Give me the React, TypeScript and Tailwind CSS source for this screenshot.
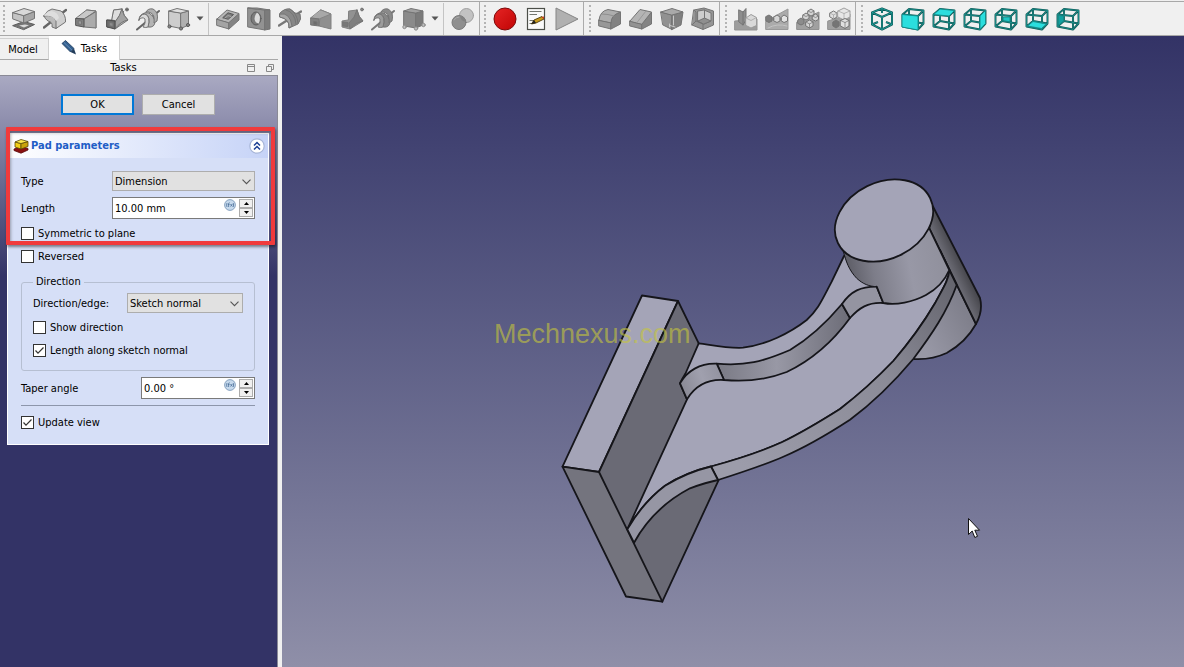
import React, { useState } from "react";

type IconProps = { children: React.ReactNode };

function Glyph({ children }: IconProps) {
  return (
    <svg
      viewBox="0 0 24 24"
      className="size-6"
      fill="none"
      stroke="#747474"
      strokeWidth="1"
      strokeLinejoin="round"
      strokeLinecap="round"
      aria-hidden="true"
    >
      {children}
    </svg>
  );
}

const PadIcon = (
  <Glyph>
    <path d="M1 18.500L12 14.500L22.500 17.500L12 22.500Z" fill="#757575" stroke="#5c5c5c" />
    <path d="M7 18.600L13 17.500L17 18.200L12 20.500Z" fill="#d8d8d8" stroke="none" />
    <path d="M1 5.500L12 8.500V16L1 12Z" fill="#c4c4c4" />
    <path d="M12 8.500L22.500 4.500V11.500L12 16Z" fill="#a6a6a6" />
    <path d="M1 5.500L12 1.500L22.500 4.500L12 8.500Z" fill="#d8d8d8" />
  </Glyph>
);

const RevolutionIcon = (
  <Glyph>
    <path d="M1 20.500L23 3" strokeWidth="2.400" stroke="#666" />
    <path d="M1 9Q4 3 9 2L18 4Q23 8 22.500 15L13 21.500Q13 12 1 9Z" fill="#cfcfcf" />
    <path d="M1 9Q11 7 13 14V21.500L9 20Q10 15 5 14Q2 12 1 9Z" fill="#bababa" />
    <path d="M1 9Q4 4 8 4Q15 5 16 11L13 14Q10 8 1 9Z" fill="#dedede" stroke="none" />
  </Glyph>
);

const LoftIcon = (
  <Glyph>
    <path d="M13 3L22 4V21L17 19L12 8Z" fill="#b4b4b4" />
    <path d="M13 3L22 4L10 12L2 11.500Z" fill="#c8c8c8" />
    <path d="M10 12L22 4.500V21L10 20Z" fill="#ababab" />
    <path d="M2 11.500L10 12V20L2 18.500Z" fill="#808080" stroke="#555" />
    <path d="M4.500 13.700L7.500 14V17.500L4.500 17Z" fill="#9a9a9a" />
  </Glyph>
);

const DarkLoftIcon = (
  <Glyph>
    <path d="M12 3L22 7V22L10 19L11 11Z" fill="#8f8f8f" stroke="#808080" />
    <path d="M12 3L22 7L10 12L2 11Z" fill="#a8a8a8" stroke="#858585" />
    <path d="M2 11L10 12V19L2 18Z" fill="#808080" />
    <path d="M5 14.500L8 15V18L5 17.500Z" fill="#6c6c6c" />
  </Glyph>
);

const PipeIcon = (
  <Glyph>
    <path d="M9 3L17 2Q19 10 23 13L10 22L6 20L2 20V13L7 13Z" fill="#b0b0b0" />
    <path d="M9 3L17 2Q16 8 11 14L7 13Z" fill="#dedede" />
    <path d="M17 2Q18 9 23 13Q16 14 10 22V15Q15 9 17 2Z" fill="#a2a2a2" />
    <path d="M2 13L10 14V22L2 20Z" fill="#6d6d6d" stroke="#4e4e4e" />
    <path d="M4.500 15.500L8 16V19.500L4.500 18.800Z" fill="#8e8e8e" />
    <path d="M18 5L21 2" strokeDasharray="1 2" />
    <circle cx="22" cy="2.500" r="1.500" fill="#686868" />
  </Glyph>
);

const DarkPipeIcon = (
  <Glyph>
    <path d="M9 4L17 3Q19 11 23 14L10 22L2 20V14L8 13Z" fill="#929292" stroke="#808080" />
    <path d="M17 3Q18 10 23 14Q16 15 10 22L9 16Q15 11 17 3Z" fill="#7f7f7f" stroke="#757575" />
    <path d="M3 15L8 15.500V19.500L3 19Z" fill="#777" />
    <circle cx="22" cy="2.500" r="1.400" fill="#8c8c8c" />
  </Glyph>
);

const HelixIcon = (
  <Glyph>
    <path d="M1 22.500L23 4" strokeWidth="2" stroke="#666" />
    <path d="M3 13Q3 7 9 7Q15 9 12 20Q19 21 19 14Q18 9 13 6Q5 4 3 13Z" fill="#b4b4b4" />
    <path d="M3 13Q6 9 9 12Q10 16 7 20Q10 21 12 20Q15 9 9 7Q4 7 3 13Z" fill="#dadada" />
    <path d="M10 5Q12 1 17 2Q23 5 21 14L18 16Q19 8 15 6Q12 4 10 5Z" fill="#b0b0b0" />
  </Glyph>
);

const DarkHelixIcon = (
  <Glyph>
    <path d="M1 22.500L23 4" strokeWidth="2" stroke="#777" />
    <path d="M3 13Q3 7 9 7Q15 9 12 20Q19 21 19 14Q18 9 13 6Q5 4 3 13Z" fill="#878787" />
    <path d="M3 13Q6 9 9 12Q10 16 7 20Q10 21 12 20Q15 9 9 7Q4 7 3 13Z" fill="#9c9c9c" />
    <path d="M10 5Q12 1 17 2Q23 5 21 14L18 16Q19 8 15 6Q12 4 10 5Z" fill="#8a8a8a" />
  </Glyph>
);

const PrimitiveIcon = (
  <Glyph>
    <path d="M2 4L14 6V21.500L2 19Z" fill="#cdcdcd" />
    <path d="M14 6L21.500 4V18L14 21.500Z" fill="#b0b0b0" />
    <path d="M2 4L10 1.500L21.500 4L14 6Z" fill="#e0e0e0" />
    <g fill="#858585" stroke="#5c5c5c">
      <circle cx="2.500" cy="19.500" r="1.600" />
      <circle cx="14" cy="21.500" r="1.600" />
      <circle cx="21" cy="18" r="1.600" />
    </g>
  </Glyph>
);

const DarkPrimitiveIcon = (
  <Glyph>
    <path d="M2 4L14 6V21L2 19Z" fill="#8a8a8a" />
    <path d="M14 6L21 4V18L14 21Z" fill="#7a7a7a" />
    <path d="M2 4L9 1.500L21 4L14 6Z" fill="#a0a0a0" />
    <g fill="#bdbdbd" stroke="#8c8c8c">
      <circle cx="2.500" cy="20" r="1.700" />
      <circle cx="14" cy="21.500" r="1.700" />
      <circle cx="21.500" cy="18" r="1.700" />
    </g>
  </Glyph>
);

const PocketIcon = (
  <Glyph>
    <path d="M1 12L13 15.500V22L1 18.500Z" fill="#a4a4a4" />
    <path d="M13 15.500L23 6.500V13L13 22Z" fill="#838383" />
    <path d="M1 12L11 3L23 6.500L13 15.500Z" fill="#b6b6b6" />
    <path d="M7 10.500L12 5.800L17.500 7.500L12.500 12Z" fill="#7d7d7d" stroke="#555" />
    <path d="M9 11L12 8.500L15 9.500" stroke="#a8a8a8" />
  </Glyph>
);

const HoleIcon = (
  <Glyph>
    <path d="M1 1L18 3V23L1 20Z" fill="#929292" />
    <path d="M1 1L10 1L23 3L18 3Z" fill="#aaa" />
    <path d="M18 3L23 3V22L18 23Z" fill="#7b7b7b" />
    <ellipse cx="9" cy="11.500" rx="5" ry="6.500" fill="#7b7b7b" stroke="#5d5d5d" />
    <path d="M10 5.500Q14.500 8 12 16.500Q8 16 7.500 12Q7.500 8 10 5.500Z" fill="#dcdcdc" stroke="none" />
  </Glyph>
);

const GrooveIcon = (
  <Glyph>
    <path d="M1 18.500L23 4.500" strokeWidth="2.400" stroke="#787878" />
    <path d="M2 6Q7 1 12 2L17 6L22 7Q24 12 20 17L11 21Q12 12 2 10Z" fill="#878787" stroke="#757575" />
    <path d="M2 7Q12 5 14 19L11 21Q12 12 2 10Z" fill="#a6a6a6" />
    <path d="M8 3Q17 5 18 17" />
    <path d="M12 2Q19 6 20 16" />
  </Glyph>
);

const BooleanIcon = (
  <Glyph>
    <circle cx="15.500" cy="8.500" r="7" fill="#c2c2c2" stroke="#a0a0a0" />
    <circle cx="8" cy="15.500" r="7" fill="#8f8f8f" stroke="#7a7a7a" />
    <path d="M9 9A7 7 0 0 1 15 15A7 7 0 0 1 9 9Z" fill="#828282" stroke="none" />
    <path d="M3 13Q5 10 8 10" stroke="#a8a8a8" />
  </Glyph>
);

const FilletIcon = (
  <Glyph>
    <path d="M1 13L13 15.500V22L1 19Z" fill="#979797" />
    <path d="M13 15Q13 8 22.500 5V17L13 22Z" fill="#828282" />
    <path d="M1 13Q2 4 10 2.500L22.500 5Q13 8 13 15.500Z" fill="#adadad" />
    <path d="M4 7Q10 7 16 9" stroke="#8f8f8f" />
  </Glyph>
);

const ChamferIcon = (
  <Glyph>
    <path d="M1 14L13 17V22L1 19Z" fill="#929292" />
    <path d="M13 17L22.500 5V17L13 22Z" fill="#848484" />
    <path d="M1 14L11 2.500L22.500 5L13 17Z" fill="#b4b4b4" />
    <path d="M8 15.500L17 4" stroke="#9a9a9a" />
  </Glyph>
);

const DraftIcon = (
  <Glyph>
    <path d="M1 5L12 8V22.500L3 18Z" fill="#919191" />
    <path d="M12 8L23 5L21 18L12 22.500Z" fill="#808080" />
    <path d="M1 5L12 1.500L23 5L12 8Z" fill="#a9a9a9" />
    <path d="M9.500 20V17M13.500 9V18M10 18.500L15 20" stroke="#c8c8c8" />
  </Glyph>
);

const ThicknessIcon = (
  <Glyph>
    <path d="M3 3L13 1L22.500 4V18L12 22.500L1 18Z" fill="#959595" />
    <path d="M7 4L13 3L20 6V14L13 17L7 14Z" fill="#cdcdcd" />
    <path d="M7 14L13.500 11L20 14L13 17Z" fill="#8f8f8f" />
    <path d="M13.500 3V11M3 3L5 5V14L1 18M5 14L12 17V22" />
  </Glyph>
);

const MirrorIcon = (
  <Glyph>
    <path d="M1 14L23 12V23H1Z" fill="#9d9d9d" stroke="#929292" />
    <path d="M5 3L9 5L12 1.500V13L9 18L5 15Z" fill="#8e8e8e" />
    <path d="M9 5V18" />
    <path d="M12 11L17 7.500L22.500 10.500V18.500L17 21L12 18.500Z" fill="#d9d9d9" stroke="#9a9a9a" />
    <path d="M12 11L17 13.500L22.500 10.500" stroke="#b0b0b0" />
  </Glyph>
);

const LinearIcon = (
  <Glyph>
    <path d="M1 14L23 2V22.500H1Z" fill="#ababab" stroke="#999" />
    <path d="M1 9.500L4 8L7 10V14L4 15.500L1 14Z" fill="#7d7d7d" />
    <path d="M9 10L12 8L15 10V14L12 15.500L9 14Z" fill="#d6d6d6" />
    <path d="M16.500 10L19 8L22.500 10V14L19 15.500L16.500 14Z" fill="#e3e3e3" />
    <path d="M7 12H9M15 12H16.500" />
    <path d="M3 21Q12 16 22 19" stroke="#c3c3c3" />
  </Glyph>
);

const PolarIcon = (
  <Glyph>
    <path d="M1 15L23 5V22.500H1Z" fill="#a0a0a0" stroke="#929292" />
    <g fill="#d4d4d4">
      <path d="M12 4L15 2L18 4V7.500L15 9L12 7.500Z" />
      <path d="M7 8L10 6L13 8V11.500L10 13L7 11.500Z" />
      <path d="M16.500 9L19.500 7L22.500 9V12.500L19.500 14L16.500 12.500Z" />
      <path d="M2 13L5 11L8 13V16.500L5 18L2 16.500Z" fill="#8c8c8c" />
      <path d="M10 15L13.500 13L17 15V19L13.500 21L10 19Z" />
    </g>
    <path d="M12 4L15 5.500L18 4M7 8L10 9.500L13 8M16.500 9L19.500 10.500L22.500 9M10 15L13.500 17L17 15M13.500 17V21" strokeWidth="0.700" />
  </Glyph>
);

const MultiTransformIcon = (
  <Glyph>
    <path d="M1 14L23 7V22.500H1Z" fill="#a0a0a0" stroke="#929292" />
    <path d="M3 6L6.500 4L10 6V10L6.500 12L3 10Z" fill="#e0e0e0" />
    <path d="M11 4L17 1L23 4V10L17 13L11 10Z" fill="#e6e6e6" stroke="#a0a0a0" />
    <path d="M11 4L17 6.500L23 4M17 6.500V13M3 6L6.500 8L10 6M6.500 8V12" stroke="#a0a0a0" strokeWidth="0.700" />
    <path d="M6 15L9 13L12 15V19L9 21L6 19Z" fill="#757575" />
    <path d="M13.500 13.500L18 11.500L22 13.500V19L18 21.500L13.500 19Z" fill="#e0e0e0" />
    <path d="M13.500 13.500L18 15.500L22 13.500M18 15.500V21.500" strokeWidth="0.700" />
  </Glyph>
);

const RecordIcon = (
  <svg viewBox="0 0 24 24" className="size-6" aria-hidden="true">
    <defs>
      <linearGradient id="rec" x1="0" y1="0" x2="1" y2="1">
        <stop offset="0" stopColor="#e62525" />
        <stop offset="1" stopColor="#c00404" />
      </linearGradient>
    </defs>
    <circle cx="12" cy="12" r="11" fill="url(#rec)" stroke="#7d0b0b" strokeWidth="1" />
  </svg>
);

const MacroIcon = (
  <svg viewBox="0 0 24 24" className="size-6" aria-hidden="true">
    <rect x="3.500" y="1.500" width="17" height="21" fill="#fafafa" stroke="#4c4f49" strokeWidth="1.200" />
    <path d="M5.500 4.500H17.500M5.500 7.500H13M5.500 13.500H11M5.500 16.500H9" stroke="#73766f" strokeWidth="1.100" />
    <path d="M7.500 17L10 13L18 9.500L20 12L12 16Z" fill="#c79a1e" stroke="#4f3b08" strokeWidth="0.900" />
    <path d="M7.500 17L10 13L12 16Z" fill="#222" />
    <path d="M17.500 10L20 9.500L20 12Z" fill="#d23a22" />
  </svg>
);

const PlayIcon = (
  <svg viewBox="0 0 24 24" className="size-6" aria-hidden="true">
    <path d="M1 1L23 12L1 23Z" fill="#b0b0b0" stroke="#858585" strokeWidth="1" strokeLinejoin="round" />
  </svg>
);

const CUBE_EDGES =
  "M8 2L22.500 3.500V16.500L8 14ZM1.500 7.500L17 9V22.500L1.500 19.500ZM1.500 7.500L8 2M17 9L22.500 3.500M17 22.500L22.500 16.500M1.500 19.500L8 14";

function ViewCube({ face, tone = "#2bdede" }: { face: string; tone?: string }) {
  return (
    <svg viewBox="0 0 24 24" className="size-6" fill="none" strokeLinejoin="round" aria-hidden="true">
      <path d={CUBE_EDGES} stroke="#0c5553" strokeWidth="1.900" />
      <path d={CUBE_EDGES} stroke="#22a8a3" strokeWidth="0.600" />
      <path d={face} fill={tone} stroke="#128a88" strokeWidth="0.900" />
    </svg>
  );
}

const ISO_EDGES =
  "M12 1.500L22 5.500V17.500L12 22.500L2 17.500V5.500ZM2 5.500L12 10L22 5.500M12 10V22.500M12 1.500V6M2 17.500L8 15M22 17.500L16 15";

const IsoIcon = (
  <svg viewBox="0 0 24 24" className="size-6" fill="none" strokeLinejoin="round" aria-hidden="true">
    <path d={ISO_EDGES} stroke="#0c5553" strokeWidth="2" />
    <path d={ISO_EDGES} stroke="#25b5b0" strokeWidth="0.700" />
  </svg>
);

function Tool({ label, children }: { label: string; children: React.ReactNode }) {
  return (
    <button type="button" aria-label={label} title={label} className="flex h-8 w-[31px] shrink-0 items-center justify-center">
      {children}
    </button>
  );
}

function DropArrow() {
  return (
    <button type="button" aria-label="More" className="flex h-8 w-[11px] shrink-0 items-center justify-center">
      <svg viewBox="0 0 8 5" className="h-[5px] w-2" aria-hidden="true">
        <path d="M0.500 0.500H7.500L4 4.500Z" fill="#555" />
      </svg>
    </button>
  );
}

function Separator() {
  return <span className="mx-[3px] h-8 w-px shrink-0 bg-[#c4c4c4]" />;
}

function Grip() {
  return <span className="mx-[3px] h-[27px] w-0 shrink-0 border-l-2 border-dotted border-[#b4b4b4]" />;
}

function Toolbar() {
  return (
    <header className="flex h-9 shrink-0 overflow-hidden border-b border-[#a8a8a8] bg-[#f0f0f0] pt-px">
      <div className="flex grow border-t border-[#a8a8a8]">
        <div className="flex shrink-0 items-center border-r border-[#ababab] pr-px">
          <Grip />
          <Tool label="Pad">{PadIcon}</Tool>
          <Tool label="Revolution">{RevolutionIcon}</Tool>
          <Tool label="Additive loft">{LoftIcon}</Tool>
          <Tool label="Additive pipe">{PipeIcon}</Tool>
          <Tool label="Additive helix">{HelixIcon}</Tool>
          <Tool label="Additive primitive">{PrimitiveIcon}</Tool>
          <DropArrow />
          <Separator />
          <Tool label="Pocket">{PocketIcon}</Tool>
          <Tool label="Hole">{HoleIcon}</Tool>
          <Tool label="Groove">{GrooveIcon}</Tool>
          <Tool label="Subtractive loft">{DarkLoftIcon}</Tool>
          <Tool label="Subtractive pipe">{DarkPipeIcon}</Tool>
          <Tool label="Subtractive helix">{DarkHelixIcon}</Tool>
          <Tool label="Subtractive primitive">{DarkPrimitiveIcon}</Tool>
          <DropArrow />
          <Separator />
          <Tool label="Boolean operation">{BooleanIcon}</Tool>
        </div>
        <div className="flex shrink-0 items-center border-r border-[#ababab] px-px">
          <Grip />
          <Tool label="Macro recording">{RecordIcon}</Tool>
          <Tool label="Macros">{MacroIcon}</Tool>
          <Tool label="Execute macro">{PlayIcon}</Tool>
        </div>
        <div className="flex shrink-0 items-center border-r border-[#ababab] pr-px pl-[2px]">
          <Grip />
          <Tool label="Fillet">{FilletIcon}</Tool>
          <Tool label="Chamfer">{ChamferIcon}</Tool>
          <Tool label="Draft">{DraftIcon}</Tool>
          <Tool label="Thickness">{ThicknessIcon}</Tool>
        </div>
        <div className="flex shrink-0 items-center border-r border-[#ababab] pr-px pl-[2px]">
          <Grip />
          <Tool label="Mirrored">{MirrorIcon}</Tool>
          <Tool label="Linear pattern">{LinearIcon}</Tool>
          <Tool label="Polar pattern">{PolarIcon}</Tool>
          <Tool label="MultiTransform">{MultiTransformIcon}</Tool>
        </div>
        <div className="flex shrink-0 items-center pl-[2px]">
          <Grip />
          <Tool label="Isometric">{IsoIcon}</Tool>
          <Tool label="Front">
            <ViewCube face="M1 7.500L17 9V23L1 20Z" />
          </Tool>
          <Tool label="Top">
            <ViewCube face="M8 2L22.500 3.500L17 9L1.500 7.500Z" />
          </Tool>
          <Tool label="Right">
            <ViewCube face="M22.500 3.500V16.500L17 22.500V9Z" />
          </Tool>
          <Tool label="Rear">
            <ViewCube face="M9 10H16V14.800L9 13.500Z" tone="#1fc4c4" />
          </Tool>
          <Tool label="Bottom">
            <ViewCube face="M8 14.500L21.500 17L16.500 21.500L2.500 19Z" />
          </Tool>
          <Tool label="Left">
            <ViewCube face="M7.500 9V14L2.500 18.500V8.500Z" tone="#12a0a0" />
          </Tool>
        </div>
      </div>
    </header>
  );
}

function Check({ label, initial = false }: { label: string; initial?: boolean }) {
  const [on, setOn] = useState(initial);
  return (
    <label className="flex h-[13px] items-center gap-1">
      <span className="relative flex size-[13px]">
        <input
          type="checkbox"
          checked={on}
          onChange={() => setOn(!on)}
          className="size-[13px] appearance-none border border-[#333] bg-white"
        />
        {on && (
          <svg viewBox="0 0 13 13" className="pointer-events-none absolute inset-0" fill="none" aria-hidden="true">
            <path d="M2.500 6.500L5 9.200L10.500 3.500" stroke="#333" strokeWidth="1.200" />
          </svg>
        )}
      </span>
      <span>{label}</span>
    </label>
  );
}

function Combo({ id, value, options }: { id: string; value: string; options: string[] }) {
  return (
    <span className="relative flex h-5 w-full">
      <select
        id={id}
        defaultValue={value}
        className="h-5 w-full appearance-none border border-[#adadad] bg-[#e1e1e1] px-[2px] pt-[2px] leading-4"
      >
        {options.map((o) => (
          <option key={o}>{o}</option>
        ))}
      </select>
      <svg viewBox="0 0 9 6" className="pointer-events-none absolute top-2 right-1 h-[6px] w-[9px]" fill="none" aria-hidden="true">
        <path d="M0.500 0.700L4.500 4.700L8.500 0.700" stroke="#555" strokeWidth="1.100" />
      </svg>
    </span>
  );
}

function Spin({ id, value }: { id: string; value: string }) {
  return (
    <span className="flex h-[22px] w-full min-w-0 border border-[#7a7a7a] bg-white p-px">
      <input id={id} defaultValue={value} className="w-0 min-w-0 grow bg-transparent pt-[2px] pl-px outline-none" />
      <button type="button" aria-label="Formula editor" className="mr-[3px] size-3 shrink-0">
        <svg viewBox="0 0 12 12" className="size-3" aria-hidden="true">
          <circle cx="6" cy="6" r="5.400" fill="#c6d9ec" stroke="#7d9aba" strokeWidth="0.900" />
          <path
            d="M3 4Q2.200 6 3 8M5.600 3.700Q4.600 3.700 4.600 5V8M3.900 5.500H5.500M6.500 5L8.300 7.500M8.300 5L6.500 7.500M9.200 4Q10 6 9.200 8"
            stroke="#4d719a"
            strokeWidth="0.800"
            fill="none"
          />
        </svg>
      </button>
      <span className="flex w-[14px] shrink-0 flex-col">
        <button type="button" aria-label="Increase" className="flex h-[9px] items-center justify-center border border-[#acacac] bg-[#f0f0f0]">
          <svg viewBox="0 0 5 3" className="h-[3px] w-[5px]" aria-hidden="true">
            <path d="M0 3H5L2.500 0Z" fill="#000" />
          </svg>
        </button>
        <button type="button" aria-label="Decrease" className="flex h-[9px] items-center justify-center border border-[#acacac] bg-[#f0f0f0]">
          <svg viewBox="0 0 5 3" className="h-[3px] w-[5px]" aria-hidden="true">
            <path d="M0 0H5L2.500 3Z" fill="#000" />
          </svg>
        </button>
      </span>
    </span>
  );
}

function PadParameters() {
  return (
    <section className="border border-white bg-[#d6dff7]">
      <h2 className="flex h-6 items-center bg-linear-to-r from-white to-[#c6d3f7] pr-[3px] pl-[5px] font-bold text-[#215dc6]">
        <svg viewBox="0 0 16 16" className="mr-[2px] size-4" strokeLinejoin="round" aria-hidden="true">
          <path d="M1 11L8 8.500L15 10.500V12L8 15.200L1 12.500Z" fill="#8a1212" stroke="#5c0b0b" strokeWidth="0.800" />
          <path d="M2 4L8 5.500V11L2 9Z" fill="#f3cf17" stroke="#5b4a05" strokeWidth="0.800" />
          <path d="M8 5.500L15 3.500V8.500L8 11Z" fill="#c9a40b" stroke="#5b4a05" strokeWidth="0.800" />
          <path d="M2 4L8 1.500L15 3.500L8 5.500Z" fill="#fbe84e" stroke="#5b4a05" strokeWidth="0.800" />
        </svg>
        <span className="grow">Pad parameters</span>
        <button type="button" aria-label="Collapse" className="size-4">
          <svg viewBox="0 0 16 16" className="size-4" fill="none" aria-hidden="true">
            <circle cx="8" cy="8" r="7.200" fill="#fff" stroke="#a8b6d8" strokeWidth="1.200" />
            <path d="M5 7.500L8 4.500L11 7.500M5 11.500L8 8.500L11 11.500" stroke="#1c3f94" strokeWidth="1.500" />
          </svg>
        </button>
      </h2>
      <div className="px-[13px] pt-[13px] pb-[15px]">
        <div className="flex items-center">
          <label htmlFor="type" className="w-[91px] shrink-0 pt-[2px]">
            Type
          </label>
          <Combo id="type" value="Dimension" options={["Dimension", "Through all", "To first", "Up to face", "Two dimensions"]} />
        </div>
        <div className="mt-[6px] flex items-center">
          <label htmlFor="length" className="w-[91px] shrink-0 pt-[2px]">
            Length
          </label>
          <Spin id="length" value="10.00 mm" />
        </div>
        <div className="mt-2 flex flex-col gap-[10px]">
          <Check label="Symmetric to plane" />
          <Check label="Reversed" />
        </div>
        <fieldset className="mt-3 rounded-[3px] border border-[#b6bfd2] px-[11px] pb-[13px]">
          <legend className="px-[3px] leading-[14px]">Direction</legend>
          <div className="mt-1 flex items-center">
            <label htmlFor="edge" className="w-[94px] shrink-0 pt-[2px]">
              Direction/edge:
            </label>
            <Combo id="edge" value="Sketch normal" options={["Sketch normal", "Select reference...", "Custom direction"]} />
          </div>
          <div className="mt-2 flex flex-col gap-[10px]">
            <Check label="Show direction" />
            <Check label="Length along sketch normal" initial />
          </div>
        </fieldset>
        <div className="mt-[6px] flex items-center">
          <label htmlFor="taper" className="w-[120px] shrink-0 pt-[2px]">
            Taper angle
          </label>
          <Spin id="taper" value="0.00 °" />
        </div>
        <hr className="mt-[6px] mb-[10px] border-[#8d96ab]" />
        <Check label="Update view" initial />
      </div>
    </section>
  );
}

function TaskPanel() {
  return (
    <aside className="flex w-[282px] shrink-0 flex-col bg-[#f0f0f0] pr-1">
      <nav className="flex h-6 shrink-0 items-end">
        <button type="button" className="h-[22px] w-[49px] border-t border-r border-b border-[#d0d0d0] border-b-[#a8a8a8] pt-[2px] pr-[2px] text-center">
          Model
        </button>
        <button type="button" className="flex h-6 w-[71px] items-center justify-center gap-1 border-r border-[#d0d0d0] bg-white">
          <svg viewBox="0 0 16 16" className="size-4" aria-hidden="true">
            <path d="M1 3.500L4.500 0.500L13 8.500L9.500 12Z" fill="#34608f" stroke="#1d3a5c" strokeWidth="0.800" />
            <path d="M13 8.500L9.500 12L15 14.500Z" fill="#223c5a" />
            <path d="M3 2.500L11 10.200" stroke="#6b93bd" strokeWidth="0.900" />
          </svg>
          <span className="pt-[2px]">Tasks</span>
        </button>
        <span className="h-px grow bg-[#a8a8a8]" />
      </nav>
      <div className="flex h-[15px] shrink-0 items-center justify-end gap-[11px] pr-1">
        <span className="grow pt-px pl-[11px] text-center">Tasks</span>
        <button type="button" aria-label="Collapse panel" className="size-2">
          <svg viewBox="0 0 8 8" className="size-2" fill="none" stroke="#888" aria-hidden="true">
            <path d="M0.500 0.500H7.500V7.500H0.500ZM0.500 2.500H7.500" />
          </svg>
        </button>
        <button type="button" aria-label="Float panel" className="size-2">
          <svg viewBox="0 0 8 8" className="size-2" fill="none" stroke="#888" aria-hidden="true">
            <path d="M0.500 2.500H5.500V7.500H0.500ZM2.500 2.500V0.500H7.500V5.500H5.500" />
          </svg>
        </button>
      </div>
      <div className="grow border-t border-r border-[#8a8a96] bg-[#333366] bg-[linear-gradient(#a9a9c2,#333366_200px)] pr-2 pl-[7px]">
        <div className="mt-[18px] flex justify-center gap-2">
          <button type="button" className="h-[21px] w-[73px] border-2 border-[#0078d7] bg-[#e1e1e1]">
            OK
          </button>
          <button type="button" className="h-[21px] w-[73px] border border-[#adadad] bg-[#e1e1e1]">
            Cancel
          </button>
        </div>
        <div className="relative mt-[18px]">
          <PadParameters />
          <div className="pointer-events-none absolute -top-[6px] -right-[6px] -left-px h-[118px] rounded-[1px] border-4 border-[#f03a3c] shadow-[1px_2px_3px_rgba(0,0,0,0.45),inset_1px_2px_3px_rgba(0,0,0,0.3)]" />
        </div>
      </div>
    </aside>
  );
}

function Viewport() {
  return (
    <main className="min-w-0 grow bg-linear-to-b from-[#333366] to-[#8f8fa8]">
      <svg viewBox="282 36 902 631" className="h-full w-full" preserveAspectRatio="xMidYMid slice" role="img" aria-label="Bracket model">
        <defs>
          <linearGradient id="cyl" gradientUnits="userSpaceOnUse" x1="846" y1="265" x2="948" y2="245">
            <stop offset="0" stopColor="#5d5d66" />
            <stop offset="0.25" stopColor="#7d7d89" />
            <stop offset="0.6" stopColor="#9898a6" />
            <stop offset="1" stopColor="#8f8f9b" />
          </linearGradient>
          <linearGradient id="cylRight" gradientUnits="userSpaceOnUse" x1="942" y1="262" x2="963" y2="252">
            <stop offset="0" stopColor="#777781" />
            <stop offset="1" stopColor="#38383d" />
          </linearGradient>
          <linearGradient id="cylLow" gradientUnits="userSpaceOnUse" x1="925" y1="350" x2="972" y2="325">
            <stop offset="0" stopColor="#9898a6" />
            <stop offset="1" stopColor="#80808c" />
          </linearGradient>
          <linearGradient id="rib" gradientUnits="userSpaceOnUse" x1="720" y1="0" x2="846" y2="0">
            <stop offset="0" stopColor="#7b7b86" />
            <stop offset="0.45" stopColor="#9898a5" />
            <stop offset="1" stopColor="#6f6f7a" />
          </linearGradient>
          <linearGradient id="bend" gradientUnits="userSpaceOnUse" x1="682" y1="385" x2="722" y2="370">
            <stop offset="0" stopColor="#8b8b97" />
            <stop offset="0.5" stopColor="#a0a0ae" />
            <stop offset="1" stopColor="#92929f" />
          </linearGradient>
          <linearGradient id="rim" gradientUnits="userSpaceOnUse" x1="740" y1="465" x2="952" y2="285">
            <stop offset="0" stopColor="#9c9caa" />
            <stop offset="0.6" stopColor="#8b8b97" />
            <stop offset="1" stopColor="#66666f" />
          </linearGradient>
        </defs>
        <g stroke="#15151a" strokeWidth="1.800" strokeLinejoin="round" strokeLinecap="round" fill="none">
          <path d="M642 295.500L678 301L599 472L562.500 466.700Z" fill="#a4a4b7" />
          <path d="M678 301L698.700 343.300L718.500 480.300L662.300 601.700L599 472Z" fill="#6a6a75" stroke="none" />
          <path d="M562.500 466.700L599 472L662.300 601.700L626 596.500Z" fill="#74747e" />
          <path d="M599 472L678 301L698.700 343.300M718.500 480.300L662.300 601.700" />
          <path
            d="M929.300 228.300L976 324C971 333 961 345 946.700 353C936 358 925 359.500 914.300 359L890 330Z"
            fill="url(#cylLow)"
          />
          <path d="M932.700 206L980 298C982 306 980.500 316 976 324L929.300 228.300Z" fill="url(#cylRight)" />
          <path
            d="M698.700 343.300C712 345 726 348.500 743 347.700C766 345 790 333 806.700 320C818 310 822 300 831.700 281.700L844 256L940 250L949.300 270C949 280 942 290 935 303.300C924 322 908 344 893.300 361C878 377 862 392 840 409C821 421 801 433 781.700 442.300C758 453 735 460 711 466.500C692 471 679 477 665 485.700C650 497 638 511 627.300 529.300L687 399.300L680 383.300C682 379 684 376 685.500 373.500Z"
            fill="#a4a4b7"
          />
          <path
            d="M949.300 270C949 280 942 290 935 303.300C924 322 908 344 893.300 361C878 377 862 392 840 409C821 421 801 433 781.700 442.300C758 453 735 460 711 466.500L718 480C740 473 762 466 783.300 456.700C806 447 828 434 850 419.700C874 402 894 382 913.300 359C932 334 947 312 956.700 285Z"
            fill="url(#rim)"
          />
          <path
            d="M711 466.500C692 471 679 477 665 485.700C650 497 638 511 627.300 529.300L634 542.700C647 519 664 502 690 488.300C699 485 708 482 718 480Z"
            fill="#9696a4"
          />
          <path
            d="M716.700 363.700C746 366 762 362 790 350C810 338 826 323 842 304L850 318C834 340 812 360 786.700 372C766 380 745 382 724 380Z"
            fill="url(#rib)"
          />
          <path d="M680 383.300C687 371 700 363 716.700 363.700L724 380C707 379 695 386 687 399.300Z" fill="url(#bend)" />
          <path d="M842 304C851 291 861 286.500 876.700 286.700L883.300 303C868 302 859 308 850 318Z" fill="#9494a1" />
          <path
            d="M843 250C846 262 849 270 856.700 278.300C863 284 869 286.500 876.700 286.700L883.300 303C896 305.500 913 302 926 295C937 289 945 280 949.300 270L929.300 228.300L880 235Z"
            fill="url(#cyl)"
            stroke="none"
          />
          <path d="M843 250C846 262 849 270 856.700 278.300C863 284 869 286.500 876.700 286.700" strokeWidth="1" />
          <path d="M876.700 286.700L883.300 303C896 305.500 913 302 926 295C937 289 945 280 949.300 270L929.300 228.300" />
          <path d="M932.700 206L933 216L929.300 228.300Z" fill="#777781" stroke="none" />
          <ellipse cx="884" cy="220.500" rx="51.300" ry="38.300" transform="rotate(-26 884 220.500)" fill="#a4a4b7" />
        </g>
        <text x="494" y="343" fill="#c6c63c" fillOpacity="0.62" className="font-['Liberation_Sans',sans-serif] text-[27px]">
          Mechnexus.com
        </text>
        <path
          d="M968.500 518.500V534.500L972.200 531L974.800 537.500L977.500 536.300L974.800 530.200H979.500Z"
          fill="#fff"
          stroke="#111"
          strokeWidth="1"
        />
      </svg>
    </main>
  );
}

export default function App() {
  return (
    <div className="flex h-screen flex-col overflow-hidden bg-[#f0f0f0] font-['DejaVu_Sans_Condensed','DejaVu_Sans',sans-serif] text-[11px] leading-[14px] text-black">
      <Toolbar />
      <div className="flex min-h-0 grow">
        <TaskPanel />
        <Viewport />
      </div>
    </div>
  );
}
